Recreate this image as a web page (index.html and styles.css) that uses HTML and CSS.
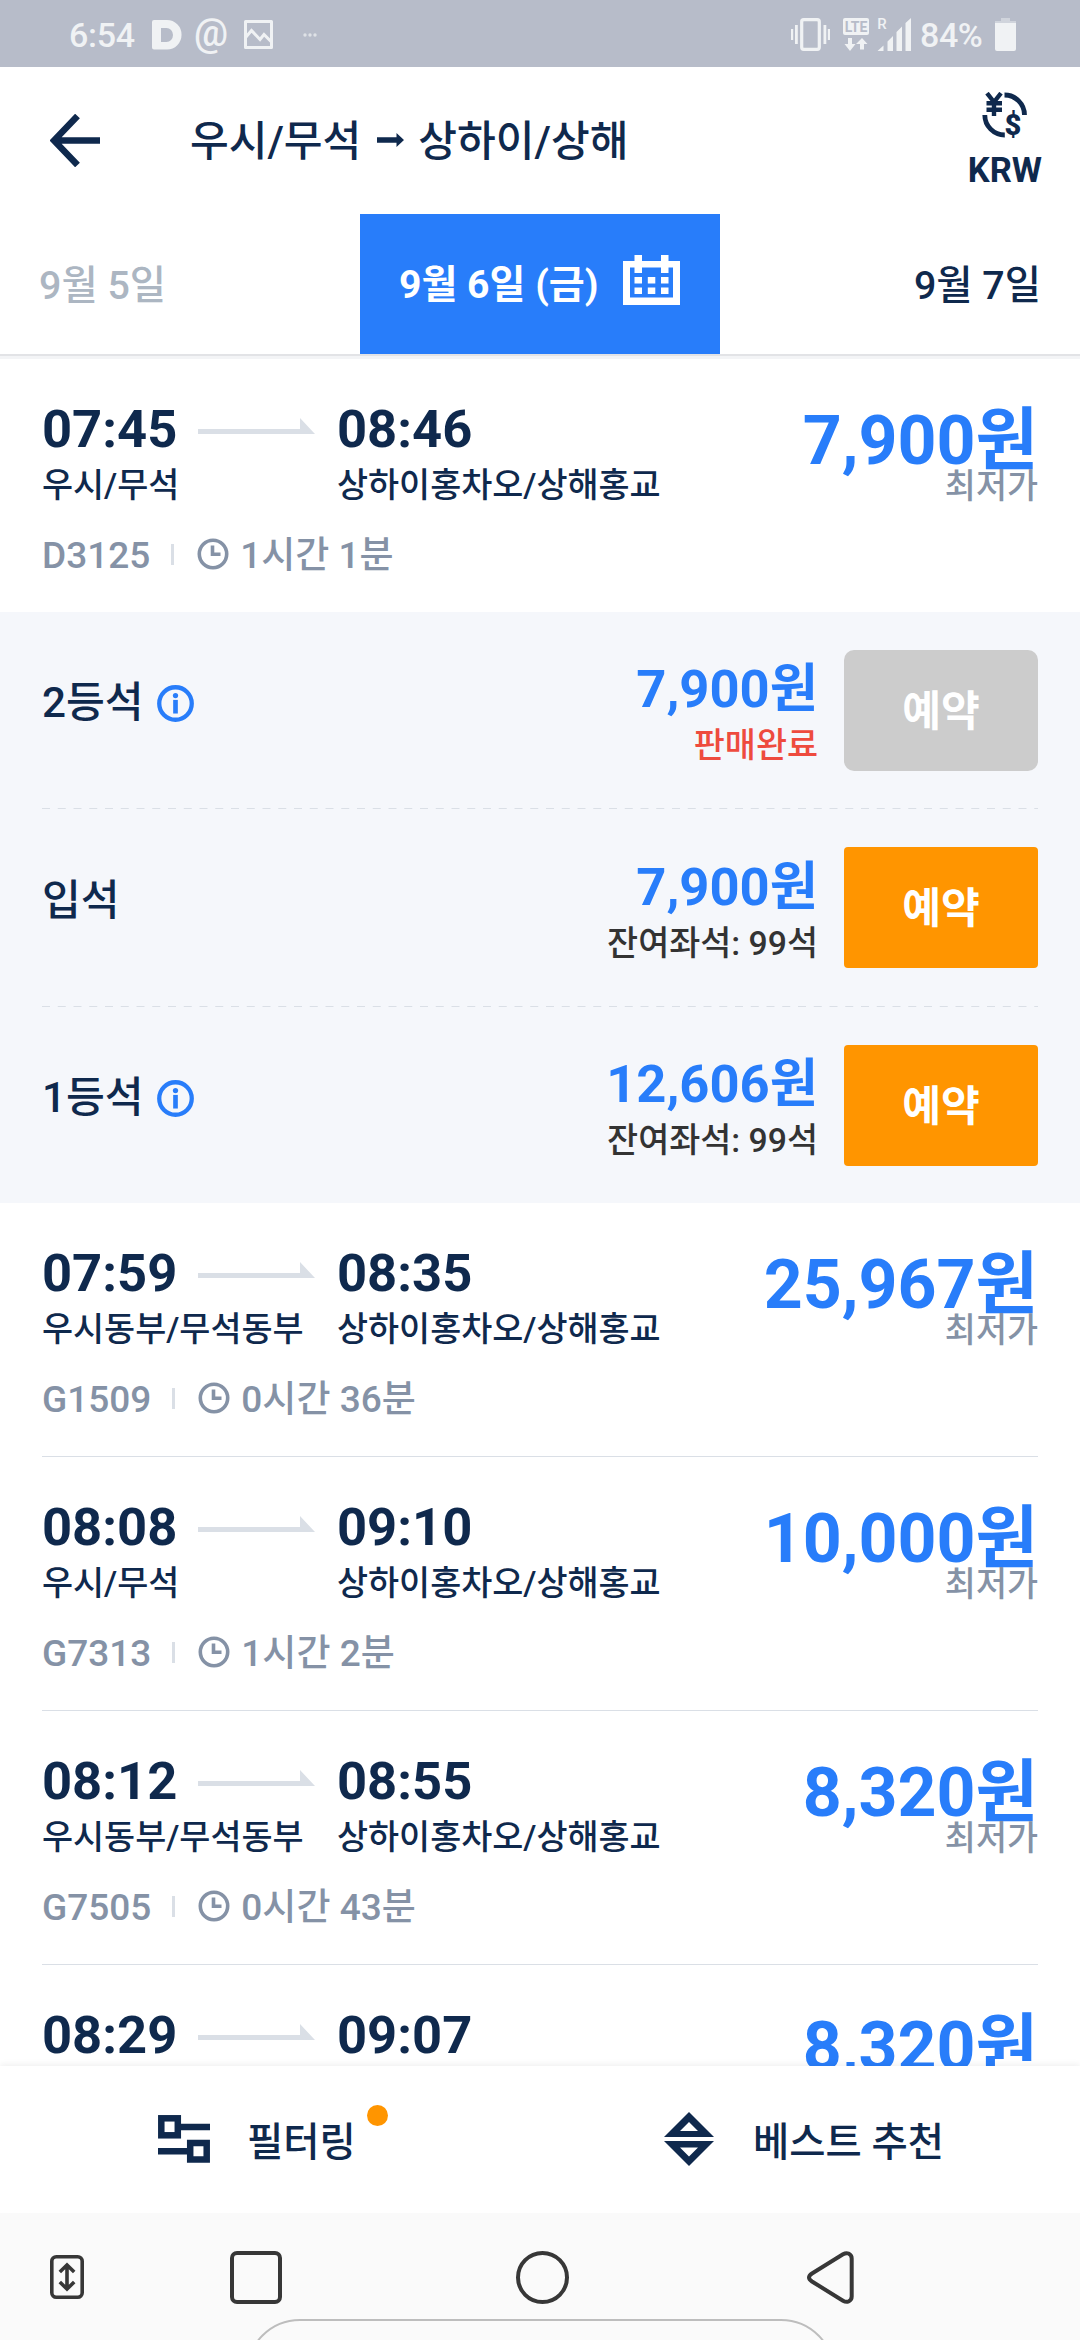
FILE: index.html
```
<!DOCTYPE html>
<html lang="ko">
<head>
<meta charset="utf-8">
<title>우시/무석 - 상하이/상해</title>
<link rel="stylesheet" href="styles.css">
</head>
<body>
<svg class="defs" aria-hidden="true">
  <symbol id="arrow" viewBox="0 0 117 16"><path d="M0 11H102V0L117 16H0Z" fill="#dadfe6"/></symbol>
  <symbol id="clock" viewBox="0 0 32 32"><circle cx="16" cy="16" r="13.7" fill="none" stroke="#8592a6" stroke-width="3.6"/><path d="M15.500 7.500V16.300H23.500" fill="none" stroke="#8592a6" stroke-width="3.600"/></symbol>
  <symbol id="info" viewBox="0 0 38 38"><circle cx="19" cy="19" r="16.7" fill="none" stroke="#287dfa" stroke-width="4.4"/><circle cx="19" cy="10.8" r="2.7" fill="#287dfa"/><path d="M19 15.3V29.3" stroke="#287dfa" stroke-width="4.8"/></symbol>
</svg>

<header class="status">
  <span class="status-time">6:54</span>
  <svg class="ic-d" width="30" height="30" viewBox="0 0 30 30"><path fill-rule="evenodd" d="M2 0H15A14.5 14.7 0 0 1 15 29.5H2Q0 29.5 0 27.5V2Q0 0 2 0ZM9 8V22H14.5A6.5 7 0 0 0 14.5 8Z" fill="#f0f2f4"/></svg>
  <span class="ic-at">@</span>
  <svg class="ic-pic" width="30" height="30" viewBox="0 0 30 30"><path d="M1.5 1.5H27.5V27.5H1.5Z" fill="none" stroke="#f0f2f4" stroke-width="3" stroke-linejoin="round"/><path d="M2 17L7.5 10.5L16 19.5L20 14.5L27 21.5" fill="none" stroke="#f0f2f4" stroke-width="3"/></svg>
  <svg class="ic-dots" width="14" height="4" viewBox="0 0 14 4"><g fill="#dfe2e7"><circle cx="2" cy="2" r="1.7"/><circle cx="7" cy="2" r="1.7"/><circle cx="12" cy="2" r="1.7"/></g></svg>
  <svg class="ic-sys" width="122" height="33" viewBox="0 0 122 33">
    <g fill="#f0f2f4">
      <path d="M0 11h2.2v11H0zM4 7h2.8v19H4zM32.5 7h2.8v19h-2.8zM36.8 11H39v11h-2.2z"/>
      <rect x="10.7" y="1.7" width="17.6" height="29.6" rx="2" fill="none" stroke="#f0f2f4" stroke-width="3.2"/>
      <rect x="52" y="0" width="26" height="17" rx="2"/>
      <path d="M57 20h4v6h3.500L59 33l-5.500-7H57zM69 31.500h4V26h3.500L71 20l-6 6h4z"/>
      <path d="M92.500 33V27.500L86.500 33H92.500ZM102 33H96.500V23.500L102 18ZM111 33H105.500V14L111 8.500ZM120 33H114.500V5L120 0Z"/>
    </g>
    <text x="65" y="13.500" text-anchor="middle" class="lte">LTE</text>
    <text x="91" y="11" text-anchor="middle" class="roam">R</text>
  </svg>
  <span class="status-bat">84%</span>
  <svg class="ic-bat" width="22" height="33" viewBox="0 0 22 33"><path d="M6 0H15V3H21V6H0V3H6Z" fill="#d0d4dc"/><path d="M0 5H21V31Q21 33 19 33H2Q0 33 0 31Z" fill="#f0f2f4"/></svg>
</header>

<nav class="topbar">
  <svg class="back" width="50" height="53" viewBox="0 0 50 53"><path d="M27.500 2L4 26.500L27.500 51M4 26.500H50" fill="none" stroke="#0f294d" stroke-width="6.600"/></svg>
  <h1 class="title">우시/무석<svg class="title-arrow" width="27" height="14" viewBox="0 0 27 14"><path d="M0 4.300H19.500V0L27 7L19.500 14V9.700H0Z" fill="#0f294d"/></svg>상하이/상해</h1>
  <div class="currency">
    <svg width="46" height="48" viewBox="0 0 46 48"><path d="M22.500 3A20 20 0 0 1 42.500 23M2.800 23A20 20 0 0 0 22.800 43" fill="none" stroke="#0f294d" stroke-width="4.800"/><path d="M5 1.200L12 10L19 1.200M12 9V24M4.500 11.300H20M4.500 17.800H20" fill="none" stroke="#0f294d" stroke-width="4.400"/><text x="31" y="42.500" text-anchor="middle" class="dollar">$</text></svg>
    <span>KRW</span>
  </div>
</nav>

<div class="dates">
  <div class="date prev">9월 5일</div>
  <div class="date now">9월 6일 (금)
    <svg width="58" height="50" viewBox="0 0 58 50"><path fill-rule="evenodd" fill="#fff" d="M0 6H11.500V0H19V6H38V0H45.500V6H57V50H0ZM7 12.500V42.500H50V12.500H45.500V18H38V12.500H19V18H11.500V12.500Z"/><path fill="#fff" d="M11.500 22h7.500v6.500h-7.500zM24.800 22h7.500v6.500h-7.500zM38 22h7.500v6.500H38zM11.500 32.500h7.500V39h-7.500zM24.800 32.500h7.500V39h-7.500zM38 32.500h7.500V39H38z"/></svg>
  </div>
  <div class="date next">9월 7일</div>
</div>

<main class="list">
  <article class="train open">
    <div class="dep"><div class="time">07:45<svg width="117" height="16"><use href="#arrow"/></svg></div><div class="station">우시/무석</div></div>
    <div class="arr"><div class="time">08:46</div><div class="station">상하이홍차오/상해홍교</div></div>
    <div class="fare"><div class="price">7,900원</div><div class="note">최저가</div></div>
    <div class="meta"><span>D3125</span><i></i><svg width="32" height="32"><use href="#clock"/></svg><span>1시간 1분</span></div>
  </article>
  <section class="seats">
    <div class="seat"><div class="name">2등석<svg width="37" height="37"><use href="#info"/></svg></div><div class="cost"><div class="sum">7,900원</div><div class="left sold">판매완료</div></div><button class="book off">예약</button></div>
    <svg class="dash" width="996" height="1"><path d="M0 .5H996" stroke="#dadfe6" stroke-dasharray="8 7.750"/></svg>
    <div class="seat mid"><div class="name">입석</div><div class="cost"><div class="sum">7,900원</div><div class="left">잔여좌석: 99석</div></div><button class="book">예약</button></div>
    <svg class="dash" width="996" height="1"><path d="M0 .5H996" stroke="#dadfe6" stroke-dasharray="8 7.750"/></svg>
    <div class="seat"><div class="name">1등석<svg width="37" height="37"><use href="#info"/></svg></div><div class="cost"><div class="sum">12,606원</div><div class="left">잔여좌석: 99석</div></div><button class="book">예약</button></div>
  </section>
  <article class="train">
    <div class="dep"><div class="time">07:59<svg width="117" height="16"><use href="#arrow"/></svg></div><div class="station">우시동부/무석동부</div></div>
    <div class="arr"><div class="time">08:35</div><div class="station">상하이홍차오/상해홍교</div></div>
    <div class="fare"><div class="price">25,967원</div><div class="note">최저가</div></div>
    <div class="meta"><span>G1509</span><i></i><svg width="32" height="32"><use href="#clock"/></svg><span>0시간 36분</span></div>
  </article>
  <article class="train">
    <div class="dep"><div class="time">08:08<svg width="117" height="16"><use href="#arrow"/></svg></div><div class="station">우시/무석</div></div>
    <div class="arr"><div class="time">09:10</div><div class="station">상하이홍차오/상해홍교</div></div>
    <div class="fare"><div class="price">10,000원</div><div class="note">최저가</div></div>
    <div class="meta"><span>G7313</span><i></i><svg width="32" height="32"><use href="#clock"/></svg><span>1시간 2분</span></div>
  </article>
  <article class="train">
    <div class="dep"><div class="time">08:12<svg width="117" height="16"><use href="#arrow"/></svg></div><div class="station">우시동부/무석동부</div></div>
    <div class="arr"><div class="time">08:55</div><div class="station">상하이홍차오/상해홍교</div></div>
    <div class="fare"><div class="price">8,320원</div><div class="note">최저가</div></div>
    <div class="meta"><span>G7505</span><i></i><svg width="32" height="32"><use href="#clock"/></svg><span>0시간 43분</span></div>
  </article>
  <article class="train last">
    <div class="dep"><div class="time">08:29<svg width="117" height="16"><use href="#arrow"/></svg></div></div>
    <div class="arr"><div class="time">09:07</div></div>
    <div class="fare"><div class="price">8,320원</div></div>
  </article>
</main>

<footer class="tools">
  <div class="tool filter">
    <svg width="52" height="48" viewBox="0 0 52 48"><g fill="none" stroke="#0f294d" stroke-width="6.500"><rect x="3.300" y="3.300" width="16.500" height="17"/><rect x="32.200" y="28" width="16.500" height="16.500"/><path d="M20 12H52M0 36.200H32"/></g></svg>
    <span>필터링</span><b class="badge"></b>
  </div>
  <div class="tool sort">
    <svg width="50" height="54" viewBox="0 0 50 54"><path fill-rule="evenodd" fill="#0f294d" d="M25 0L50 25H0ZM25 10L16 19H34ZM25 54L50 29H0ZM25 44.500L34 35.500H16Z"/></svg>
    <span>베스트 추천</span>
  </div>
</footer>

<div class="sysnav">
  <svg class="n1" width="34" height="44" viewBox="0 0 34 44"><g fill="none" stroke="#373737" stroke-width="3.600"><rect x="1.800" y="1.800" width="30.400" height="40.400" rx="4.500"/><path d="M17 11V33M9.800 17L17 10L24.200 17M9.800 27L17 34L24.200 27"/></g></svg>
  <svg class="n2" width="52" height="53" viewBox="0 0 52 53"><rect x="2" y="2" width="48" height="49" rx="5" fill="none" stroke="#373737" stroke-width="4"/></svg>
  <svg class="n3" width="53" height="53" viewBox="0 0 53 53"><circle cx="26.500" cy="26.500" r="24.500" fill="none" stroke="#373737" stroke-width="4"/></svg>
  <svg class="n4" width="47" height="53" viewBox="0 0 47 53"><path d="M36 3.300Q39 1.500 41.500 2.500Q44.700 4 44.700 7.500V45.500Q44.700 49 41.500 50.500Q39 51.500 36 49.700L5 30.500Q-1 26.500 5 22.500Z" fill="none" stroke="#373737" stroke-width="4"/></svg>
  <div class="handle"></div>
</div>
</body>
</html>
```
FILE: styles.css
```
* { box-sizing: border-box; margin: 0; padding: 0; }
body {
  width: 1080px; height: 2340px; overflow: hidden;
  display: flex; flex-direction: column;
  background: #fff; color: #0f294d;
  font-family: Roboto, "Noto Sans CJK KR", sans-serif; font-weight: 500;
}
svg { display: block; flex: none; }
.defs { position: absolute; width: 0; height: 0; }

.status { flex: none; height: 67px; background: #b7bcc9; color: #f0f2f4; display: flex; align-items: center; padding: 2px 63px 0 69px; font-size: 34px; line-height: 35px; font-weight: 500; }
.status-time { width: 83px; padding-top: 1px; letter-spacing: -.3px; }
.ic-d { margin-right: 12px; }
.ic-at { width: 50px; font-size: 38px; font-weight: 500; margin-top: -3px; }
.ic-dots { margin-left: 29px; }
.ic-sys { margin-left: auto; overflow: visible; }
.lte { font: 700 14px Roboto, sans-serif; fill: #b7bcc9; }
.roam { font: 500 15px Roboto, sans-serif; fill: #f0f2f4; }
.status-bat { margin-left: 7px; width: 75px; padding-top: 1px; letter-spacing: -.4px; }

.topbar { flex: none; height: 147px; display: flex; align-items: center; padding: 0 38px 0 50px; }
.back { margin-top: -1px; }
.title { margin-left: 90px; font-size: 42.100px; line-height: 50px; font-weight: 500; display: flex; align-items: center; padding-top: 2px; }
.title-arrow { margin: -4px 14px 0 16px; }
.currency { margin-left: auto; display: flex; flex-direction: column; align-items: center; font-size: 34.500px; line-height: 40px; font-weight: 700; }
.currency span { margin-top: 10px; }
.dollar { font: 900 29px Roboto, sans-serif; fill: #0f294d; }

.dates { flex: none; height: 145px; display: grid; grid-template-columns: 1fr 1fr 1fr; grid-template-rows: 140px; font-size: 39.400px; border-bottom: 5px solid #f3f4f6; }
.date { display: flex; align-items: center; padding: 0 39px 6px; box-shadow: 0 2px 0 #e2e3e6; }
.prev { color: #acb6c2; }
.now { background: #287dfa; color: #fff; font-size: 39.100px; font-weight: 700; justify-content: space-between; }
.now svg { margin-top: -2px; }
.next { justify-content: flex-end; }

.list { flex: 1; min-height: 0; overflow: hidden; }
.train { height: 254px; margin: 0 42px; padding-top: 40px; display: grid; grid-template-columns: 295px 1fr auto; grid-template-rows: 136px 44px; border-bottom: 1px solid #dadfe6; }
.train.open { height: 253px; border-bottom: 0; }
.time { font-size: 52.500px; line-height: 60px; font-weight: 700; display: flex; }
.time svg { margin: 19px 22px 0 auto; }
.station { font-size: 33.750px; line-height: 44px; margin-top: 5px; white-space: nowrap; }
.fare { text-align: right; padding-top: 14px; }
.price { font-size: 68px; line-height: 56px; font-weight: 700; color: #287dfa; }
.note { font-size: 33.750px; line-height: 36px; color: #8592a6; }
.meta { grid-column: 1 / -1; display: flex; font-size: 37px; line-height: 42px; font-weight: 500; color: #8592a6; }
.meta i { width: 3px; height: 21px; margin: 9px 23px 0 21px; background: #dadfe6; }
.meta svg { margin: 3px 11px 0 0; }

.seats { background: #f5f7fb; height: 591px; padding: 0 42px; }
.seat { height: 196px; display: flex; align-items: center; }
.seat.mid { height: 197px; }
.name { flex: 1; display: flex; align-items: center; font-size: 42.200px; line-height: 50px; padding-bottom: 14px; }
.name svg { margin-left: 13px; }
.cost { text-align: right; margin-right: 26px; padding-top: 7px; }
.sum { font-size: 52.500px; line-height: 60px; font-weight: 700; color: #287dfa; }
.left { font-size: 33.750px; line-height: 44px; color: #333; margin-top: 5px; }
.sold { color: #ee4b3e; }
.book { width: 194px; height: 121px; padding-bottom: 6px; border: 0; border-radius: 4px; background: #ff9500; color: #fff; font: inherit; font-size: 42.200px; font-weight: 700; }
.off { background: #ccc; border-radius: 10px; }

.tools { flex: none; height: 147px; position: relative; background: #fff; display: grid; grid-template-columns: 1fr 1fr; box-shadow: 0 -2px 6px rgba(0,0,0,.06); font-size: 39.400px; }
.tool { display: flex; align-items: center; padding-bottom: 2px; }
.tool span { margin-top: -1px; }
.filter { padding-left: 158px; gap: 37px; }
.sort { padding-left: 124px; gap: 39px; }
.badge { width: 21px; height: 21px; border-radius: 50%; background: #ff9500; margin: -46px 0 0 -26px; }

.sysnav { flex: none; height: 127px; position: relative; overflow: hidden; background: #fafafa; display: flex; align-items: flex-start; padding: 38px 0 0 50px; }
.n1 { margin: 4px 146px 0 0; }
.n2 { margin-right: 234px; }
.n3 { margin-right: 238px; }
.handle { position: absolute; left: 246px; top: 106px; width: 589px; height: 110px; border: 2px solid #bdbdbd; border-radius: 54px; }
```
